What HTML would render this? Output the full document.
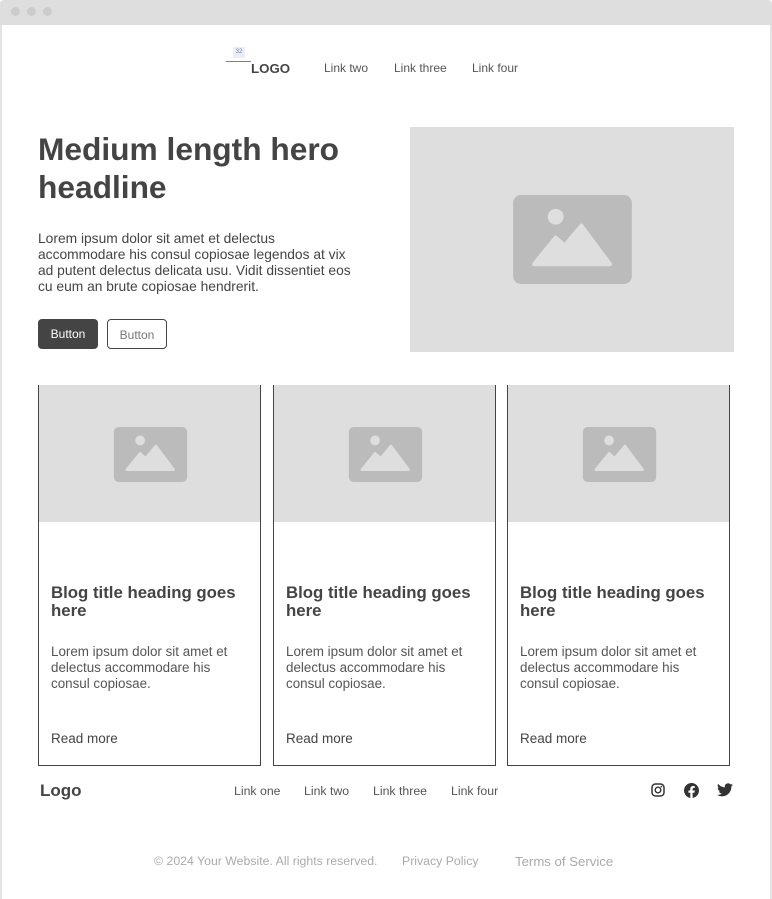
<!DOCTYPE html>
<html><head><meta charset="utf-8"><style>
*{margin:0;padding:0;box-sizing:border-box}
body{width:772px;height:899px;position:relative;background:#fff;font-family:"Liberation Sans",Arial,sans-serif;color:#444;overflow:hidden}
.a{position:absolute;white-space:nowrap}
.bar{left:0;top:0;width:772px;height:25px;background:#dedede;border-radius:4px 4px 0 0}
.dot{top:7px;width:9px;height:9px;border-radius:50%;background:#ccc}
.nav{font-size:12px;color:#555;top:61px}
.card{top:385px;width:223px;height:381px;border:1px solid #444;border-top:none}
.card .img{position:absolute;left:0;top:0;right:0;height:137px;background:#dedede}
.card svg{position:absolute;left:74px;top:42px}
.card h3{position:absolute;left:12px;top:199px;font-size:16.8px;line-height:18px;font-weight:bold;color:#444;white-space:normal;width:200px}
.card p{position:absolute;left:12px;top:259px;font-size:13.4px;line-height:16px;color:#555;white-space:normal;width:186px}
.card .rm{position:absolute;left:12px;top:346px;font-size:13.5px;color:#444}
.fl{top:784px;font-size:12.3px;color:#555}
.bt{top:854px;font-size:12.3px;color:#aaa}
</style></head><body>
<div class="a bar"></div>
<div class="a dot" style="left:11px"></div>
<div class="a dot" style="left:27px"></div>
<div class="a dot" style="left:43px"></div>
<div class="a" style="left:0;top:25px;width:2px;height:874px;background:#e4e4e4"></div>
<div class="a" style="right:0;top:25px;width:2px;height:874px;background:#e4e4e4"></div>

<div class="a" style="left:233px;top:47px;width:12px;height:11px;background:#eee;font-size:6px;color:#5b7fe0;text-align:center;line-height:11px">32</div>
<div class="a" style="left:226px;top:61px;width:25px;height:1px;background:#5b7fe0"></div>
<div class="a" style="left:251px;top:61px;font-size:13.3px;font-weight:bold;color:#444">LOGO</div>
<div class="a nav" style="left:324px">Link two</div>
<div class="a nav" style="left:394px">Link three</div>
<div class="a nav" style="left:472px">Link four</div>

<div class="a" style="left:38px;top:130px;font-size:31.7px;line-height:38px;font-weight:bold;color:#444">Medium length hero<br>headline</div>
<div class="a" style="left:38px;top:231px;font-size:13.8px;line-height:16px;color:#444">Lorem ipsum dolor sit amet et delectus<br>accommodare his consul copiosae legendos at vix<br>ad putent delectus delicata usu. Vidit dissentiet eos<br>cu eum an brute copiosae hendrerit.</div>
<div class="a" style="left:38px;top:319px;width:60px;height:30px;background:#444;border-radius:4px;color:#fff;font-size:12px;line-height:31px;text-align:center">Button</div>
<div class="a" style="left:107px;top:319px;width:60px;height:30px;border:1px solid #444;border-radius:4px;color:#777;font-size:12px;line-height:30px;text-align:center">Button</div>

<div class="a" style="left:410px;top:127px;width:324px;height:225px;background:#dedede"></div>
<svg class="a" style="left:513px;top:195px" width="119" height="89" viewBox="0 0 120 90"><rect width="120" height="90" rx="8" fill="#bbb"/><circle cx="43" cy="22" r="8" fill="#dedede"/><path d="M21 70 L43 43 L52 51 L69 31 L98 70 Z" fill="#dedede" stroke="#dedede" stroke-width="4" stroke-linejoin="round"/></svg>

<div class="a card" style="left:38px"><div class="img"></div><svg width="75" height="55" viewBox="0 0 120 90"><rect width="120" height="90" rx="8" fill="#bbb"/><circle cx="43" cy="22" r="8" fill="#dedede"/><path d="M21 70 L43 43 L52 51 L69 31 L98 70 Z" fill="#dedede" stroke="#dedede" stroke-width="4" stroke-linejoin="round"/></svg><h3>Blog title heading goes here</h3><p>Lorem ipsum dolor sit amet et delectus accommodare his consul copiosae.</p><div class="rm">Read more</div></div>
<div class="a card" style="left:273px"><div class="img"></div><svg width="75" height="55" viewBox="0 0 120 90"><rect width="120" height="90" rx="8" fill="#bbb"/><circle cx="43" cy="22" r="8" fill="#dedede"/><path d="M21 70 L43 43 L52 51 L69 31 L98 70 Z" fill="#dedede" stroke="#dedede" stroke-width="4" stroke-linejoin="round"/></svg><h3>Blog title heading goes here</h3><p>Lorem ipsum dolor sit amet et delectus accommodare his consul copiosae.</p><div class="rm">Read more</div></div>
<div class="a card" style="left:507px"><div class="img"></div><svg width="75" height="55" viewBox="0 0 120 90"><rect width="120" height="90" rx="8" fill="#bbb"/><circle cx="43" cy="22" r="8" fill="#dedede"/><path d="M21 70 L43 43 L52 51 L69 31 L98 70 Z" fill="#dedede" stroke="#dedede" stroke-width="4" stroke-linejoin="round"/></svg><h3>Blog title heading goes here</h3><p>Lorem ipsum dolor sit amet et delectus accommodare his consul copiosae.</p><div class="rm">Read more</div></div>

<div class="a" style="left:40px;top:781px;font-size:17px;font-weight:bold;color:#444">Logo</div>
<div class="a fl" style="left:234px">Link one</div>
<div class="a fl" style="left:304px">Link two</div>
<div class="a fl" style="left:373px">Link three</div>
<div class="a fl" style="left:451px">Link four</div>
<svg class="a" style="left:651px;top:783px" width="14" height="14" viewBox="0 0 14 14"><rect x="1" y="1" width="12" height="12" rx="3.5" fill="none" stroke="#333" stroke-width="1.5"/><circle cx="7" cy="7" r="2.8" fill="none" stroke="#333" stroke-width="1.4"/><circle cx="10.4" cy="3.6" r="0.8" fill="#333"/></svg>
<svg class="a" style="left:684px;top:783px" width="15" height="15" viewBox="0 0 24 24"><path fill="#333" d="M24 12a12 12 0 1 0-13.9 11.9v-8.4H7.1V12h3V9.4c0-3 1.8-4.7 4.5-4.7 1.3 0 2.700.2 2.700.2v2.9h-1.5c-1.5 0-2 .9-2 1.9V12h3.4l-.5 3.5h-2.9v8.4A12 12 0 0 0 24 12z"/></svg>
<svg class="a" style="left:717px;top:783px" width="16" height="14" viewBox="0 0 24 20"><path fill="#333" d="M24 2.4a9.8 9.8 0 0 1-2.8.8A4.9 4.9 0 0 0 23.3.4a9.9 9.9 0 0 1-3.1 1.2A4.9 4.9 0 0 0 11.8 6 14 14 0 0 1 1.7.9a4.9 4.9 0 0 0 1.5 6.6 4.9 4.9 0 0 1-2.2-.6 4.9 4.9 0 0 0 3.9 4.8 4.9 4.9 0 0 1-2.2.1 4.9 4.9 0 0 0 4.6 3.4A9.9 9.9 0 0 1 0 17.3 14 14 0 0 0 7.5 19.5c9.1 0 14-7.5 14-14v-.6A10 10 0 0 0 24 2.4z"/></svg>

<div class="a bt" style="left:154px">© 2024 Your Website. All rights reserved.</div>
<div class="a bt" style="left:402px">Privacy Policy</div>
<div class="a bt" style="left:515px;font-size:13.2px">Terms of Service</div>
</body></html>
